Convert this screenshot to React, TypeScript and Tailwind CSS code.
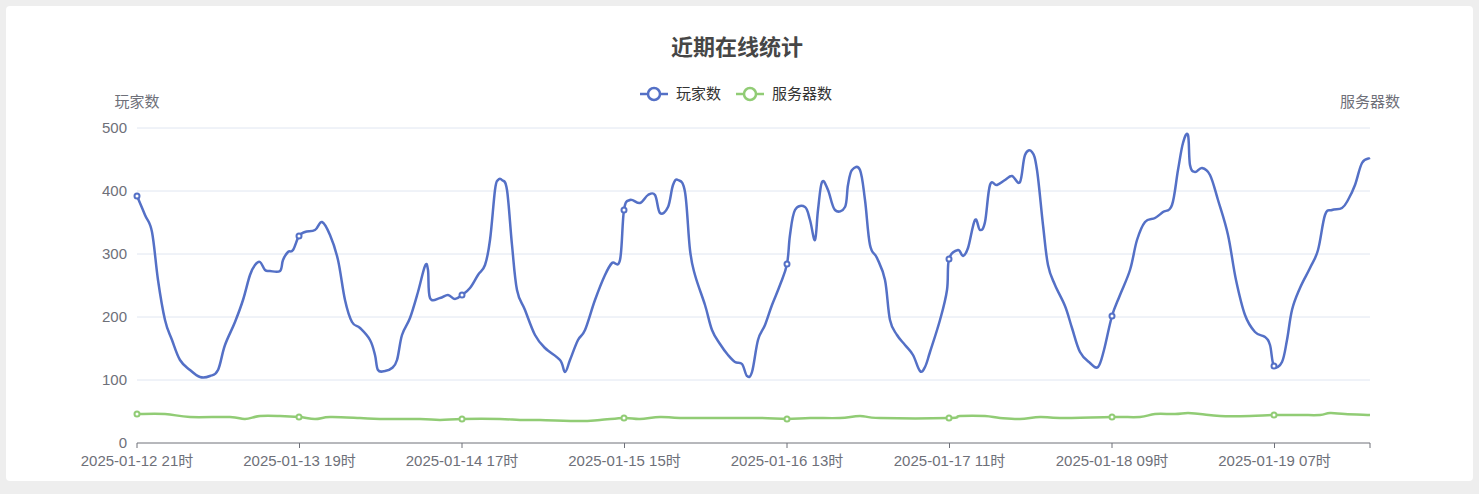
import React from "react";

const blue: [number, number][] = [[137,196],[145,215],[152,232],[158,280],[165,320],[172,340],[180,360],[190,370],[200,377],[210,376],[218,370],[225,345],[235,322],[243,300],[250,275],[255,265],[260,262],[265,270],[270,271],[280,271],[283,260],[288,252],[293,250],[299,236],[305,232],[315,230],[322,222],[330,235],[338,260],[345,300],[352,322],[360,328],[370,340],[375,355],[378,370],[385,371],[392,368],[397,360],[402,335],[410,318],[418,292],[425,266],[428,270],[430,298],[440,298],[448,295],[455,299],[462,295],[470,288],[478,275],[485,265],[490,240],[495,190],[498,180],[502,180],[507,190],[512,245],[517,290],[525,310],[535,335],[545,348],[560,360],[565,372],[570,360],[578,340],[585,330],[595,300],[605,275],[612,263],[620,260],[624,210],[630,200],[640,203],[648,195],[655,195],[660,213],[668,207],[673,185],[678,180],[685,192],[690,250],[695,275],[705,305],[712,330],[720,344],[728,355],[735,362],[742,364],[747,376],[752,372],[758,340],[765,325],[772,305],[780,285],[787,264],[790,235],[795,210],[805,207],[810,220],[815,240],[818,210],[822,182],[828,190],[835,210],[845,207],[848,185],[852,170],[860,170],[865,200],[870,245],[877,258],[885,280],[890,320],[897,335],[905,345],[913,355],[920,371],[925,367],[930,352],[940,320],[947,290],[949,259],[958,250],[963,256],[968,248],[975,220],[980,230],[985,222],[990,185],[997,185],[1005,180],[1012,176],[1020,182],[1025,155],[1032,152],[1037,170],[1043,225],[1048,265],[1055,285],[1065,306],[1072,328],[1080,352],[1090,363],[1098,367],[1104,350],[1112,316],[1120,295],[1130,270],[1137,240],[1145,222],[1155,218],[1163,212],[1172,205],[1178,170],[1183,143],[1188,135],[1190,165],[1195,172],[1202,168],[1210,175],[1218,200],[1228,235],[1236,280],[1245,315],[1255,332],[1265,337],[1270,345],[1274,366],[1282,362],[1287,340],[1292,310],[1300,288],[1310,268],[1318,250],[1325,215],[1332,210],[1342,208],[1348,200],[1355,185],[1362,163],[1370,158]];

const green: [number, number][] = [[137,414],[165,414],[190,417],[230,417],[245,419],[260,416],[280,416],[299,417],[315,419],[330,417],[360,418],[380,419],[420,419],[440,420],[462,419],[500,419],[520,420],[540,420],[580,421],[600,420],[624,418],[640,419],[660,417],[680,418],[720,418],[760,418],[787,419],[810,418],[840,418],[860,416],[880,418],[949,418],[960,416],[985,416],[1000,418],[1020,419],[1040,417],[1060,418],[1112,417],[1140,417],[1155,414],[1175,414],[1188,413],[1200,414],[1220,416],[1250,416],[1274,415],[1300,415],[1320,415],[1330,413],[1345,414],[1370,415]];

function smooth(pts: [number, number][]) {
  let d = `M${pts[0][0]},${pts[0][1]}`;
  for (let i = 0; i < pts.length - 1; i++) {
    const p0 = pts[Math.max(0, i - 1)], p1 = pts[i], p2 = pts[i + 1], p3 = pts[Math.min(pts.length - 1, i + 2)];
    const t = 0.18;
    const c1 = [p1[0] + (p2[0] - p0[0]) * t, p1[1] + (p2[1] - p0[1]) * t];
    const c2 = [p2[0] - (p3[0] - p1[0]) * t, p2[1] - (p3[1] - p1[1]) * t];
    d += ` C${c1[0].toFixed(1)},${c1[1].toFixed(1)} ${c2[0].toFixed(1)},${c2[1].toFixed(1)} ${p2[0]},${p2[1]}`;
  }
  return d;
}

const ticksX = [137, 299.5, 462, 624.5, 787, 949.5, 1112, 1274.5];
const labels = ["2025-01-12 21时","2025-01-13 19时","2025-01-14 17时","2025-01-15 15时","2025-01-16 13时","2025-01-17 11时","2025-01-18 09时","2025-01-19 07时"];
const blueMarks: [number, number][] = [[137,196],[299,236],[462,295],[624,210],[787,264],[949,259],[1112,316],[1274,366]];
const greenMarks: [number, number][] = [[137,414],[299,417],[462,419],[624,418],[787,419],[949,418],[1112,417],[1274,415]];

export default function App() {
  const font = "'Liberation Sans', 'Noto Sans CJK SC', sans-serif";
  return (
    <div className="w-[1479px] h-[494px] bg-[#eeeeee] p-[6px] pb-[13px]" style={{ fontFamily: font }}>
      <div className="w-full h-full bg-white rounded-[4px] relative">
        <svg width="1467" height="475" viewBox="6 6 1467 475" className="block">
          <text x="737" y="55" textAnchor="middle" fontSize="22" fontWeight="700" fill="#464646">近期在线统计</text>
          <line x1="640" y1="94" x2="668" y2="94" stroke="#5470c6" strokeWidth="2.5" />
          <circle cx="654" cy="94" r="6" fill="#fff" stroke="#5470c6" strokeWidth="2.5" />
          <text x="676" y="99" fontSize="15" fill="#333">玩家数</text>
          <line x1="736" y1="94" x2="764" y2="94" stroke="#91cc75" strokeWidth="2.5" />
          <circle cx="750" cy="94" r="6" fill="#fff" stroke="#91cc75" strokeWidth="2.5" />
          <text x="772" y="99" fontSize="15" fill="#333">服务器数</text>
          <text x="137" y="107" textAnchor="middle" fontSize="15" fill="#6e7079">玩家数</text>
          <text x="1370" y="107" textAnchor="middle" fontSize="15" fill="#6e7079">服务器数</text>
          {[0, 100, 200, 300, 400, 500].map((v) => {
            const y = 443 - v * 0.63;
            return (
              <g key={v}>
                {v > 0 && <line x1="137" x2="1370" y1={y} y2={y} stroke="#e0e6f1" strokeWidth="1" />}
                <text x="127" y={y + 5} textAnchor="end" fontSize="15" fill="#6e7079">{v}</text>
              </g>
            );
          })}
          <line x1="137" x2="1370" y1="443" y2="443" stroke="#6e7079" strokeWidth="1" />
          {ticksX.map((x, i) => (
            <g key={i}>
              <line x1={x} x2={x} y1="443" y2="448" stroke="#6e7079" />
              <text x={x} y="466" textAnchor="middle" fontSize="15" fill="#6e7079">{labels[i]}</text>
            </g>
          ))}
          <line x1="1370" x2="1370" y1="443" y2="448" stroke="#6e7079" />
          <path d={smooth(green)} fill="none" stroke="#91cc75" strokeWidth="2.5" />
          <path d={smooth(blue)} fill="none" stroke="#5470c6" strokeWidth="2.5" />
          {greenMarks.map(([x, y], i) => <circle key={i} cx={x} cy={y} r="2.5" fill="#fff" stroke="#91cc75" strokeWidth="2" />)}
          {blueMarks.map(([x, y], i) => <circle key={i} cx={x} cy={y} r="2.5" fill="#fff" stroke="#5470c6" strokeWidth="2" />)}
        </svg>
      </div>
    </div>
  );
}
